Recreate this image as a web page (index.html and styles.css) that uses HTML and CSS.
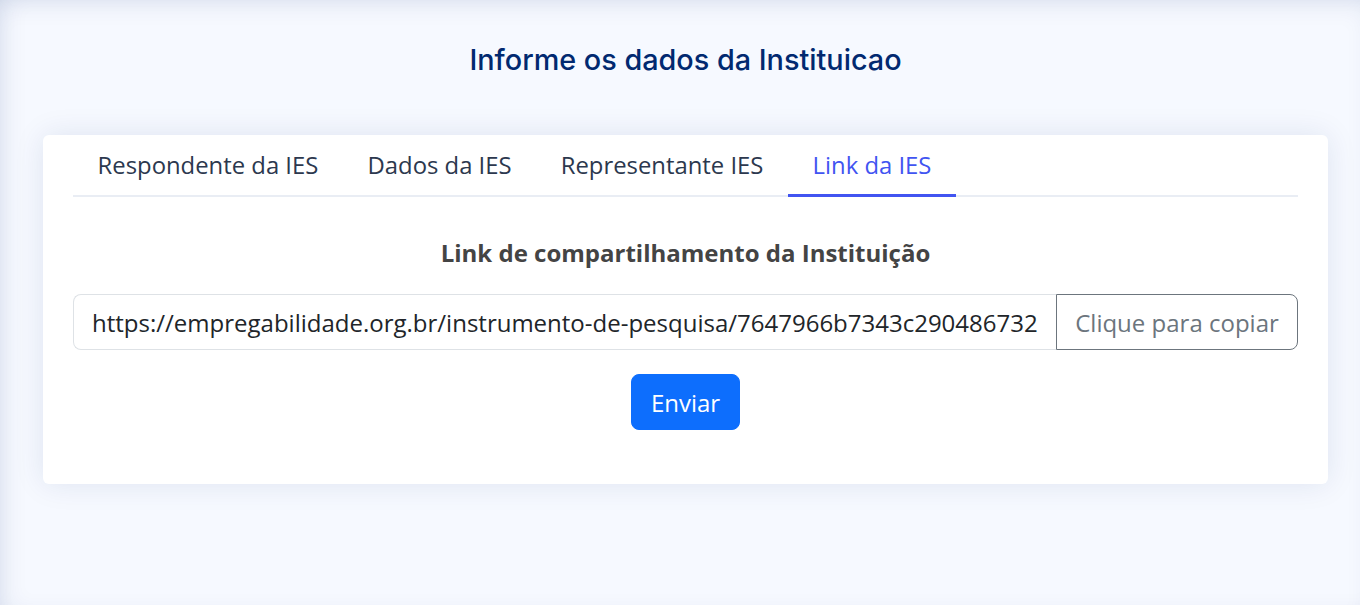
FILE: index.html
```html
<!DOCTYPE html>
<html lang="pt-BR">
<head>
<meta charset="utf-8">
<title>Informe os dados da Instituicao</title>
<link rel="stylesheet" href="styles.css">
</head>
<body>
<main class="main">
  <h1 class="page-title">Informe os dados da Instituicao</h1>
  <section class="card">
    <ul class="tabs">
      <li class="tab">Respondente da IES</li>
      <li class="tab">Dados da IES</li>
      <li class="tab">Representante IES</li>
      <li class="tab active">Link da IES</li>
    </ul>
    <div class="pane">
      <h2 class="pane-title">Link de compartilhamento da Instituição</h2>
      <div class="input-group">
        <input class="link-input" type="text" value="https://empregabilidade.org.br/instrumento-de-pesquisa/7647966b7343c290486732" readonly>
        <button class="copy-btn" type="button">Clique para copiar</button>
      </div>
      <div class="actions">
        <button class="send-btn" type="button">Enviar</button>
      </div>
    </div>
  </section>
</main>
</body>
</html>
```

FILE: styles.css
```css
* { box-sizing: border-box; }
html, body { margin: 0; height: 100%; }
body {
  background: #f6f9ff;
  font-family: "Open Sans", "Noto Sans", sans-serif;
  color: #444444;
}
.main {
  min-height: 605px;
  padding: 42px 32px 0 43px;
  box-shadow: inset 14px 0 28px -14px rgba(1, 41, 112, 0.12), inset 0 14px 28px -14px rgba(1, 41, 112, 0.12);
}
.page-title {
  margin: 0 0 57px;
  text-align: center;
  font-family: "Inter", "Noto Sans", sans-serif;
  font-weight: 500;
  font-size: 28.8px;
  line-height: 36px;
  color: #012970;
}
.card {
  background: #fff;
  border-radius: 6px;
  box-shadow: 0 0 30px rgba(1, 41, 112, 0.1);
  padding: 0 30px 54px;
}
.tabs {
  list-style: none;
  margin: 0;
  padding: 0;
  display: flex;
  border-bottom: 2px solid #e9edf4;
}
.tab {
  padding: 12px 24.6px 11px;
  font-size: 23.85px;
  line-height: 36px;
  color: #2c384e;
  margin-bottom: -2px;
  border-bottom: 3px solid transparent;
}
.tab.active {
  color: #4154f1;
  border-bottom-color: #4154f1;
}
.pane { padding-top: 38px; }
.pane-title {
  margin: 0 0 23px;
  text-align: center;
  font-size: 24px;
  font-weight: 700;
  line-height: 36px;
  color: #444444;
}
.input-group {
  display: flex;
  height: 56px;
}
.link-input {
  flex: 1;
  min-width: 0;
  font-family: inherit;
  font-size: 24px;
  color: #212529;
  padding: 8px 18px;
  border: 1px solid #dee2e6;
  border-right: none;
  border-radius: 8px 0 0 8px;
  background: #fff;
  outline: none;
}
.copy-btn {
  font-family: inherit;
  font-size: 24px;
  color: #6c757d;
  background: #fff;
  border: 1px solid #6c757d;
  border-radius: 0 8px 8px 0;
  padding: 8px 18px;
  width: 242px;
  white-space: nowrap;
}
.actions {
  display: flex;
  justify-content: center;
  margin-top: 24px;
}
.send-btn {
  font-family: inherit;
  font-size: 24px;
  color: #fff;
  background: #0d6efd;
  border: 1px solid #0d6efd;
  border-radius: 8px;
  height: 56px;
  padding: 0 18.5px;
}
```
